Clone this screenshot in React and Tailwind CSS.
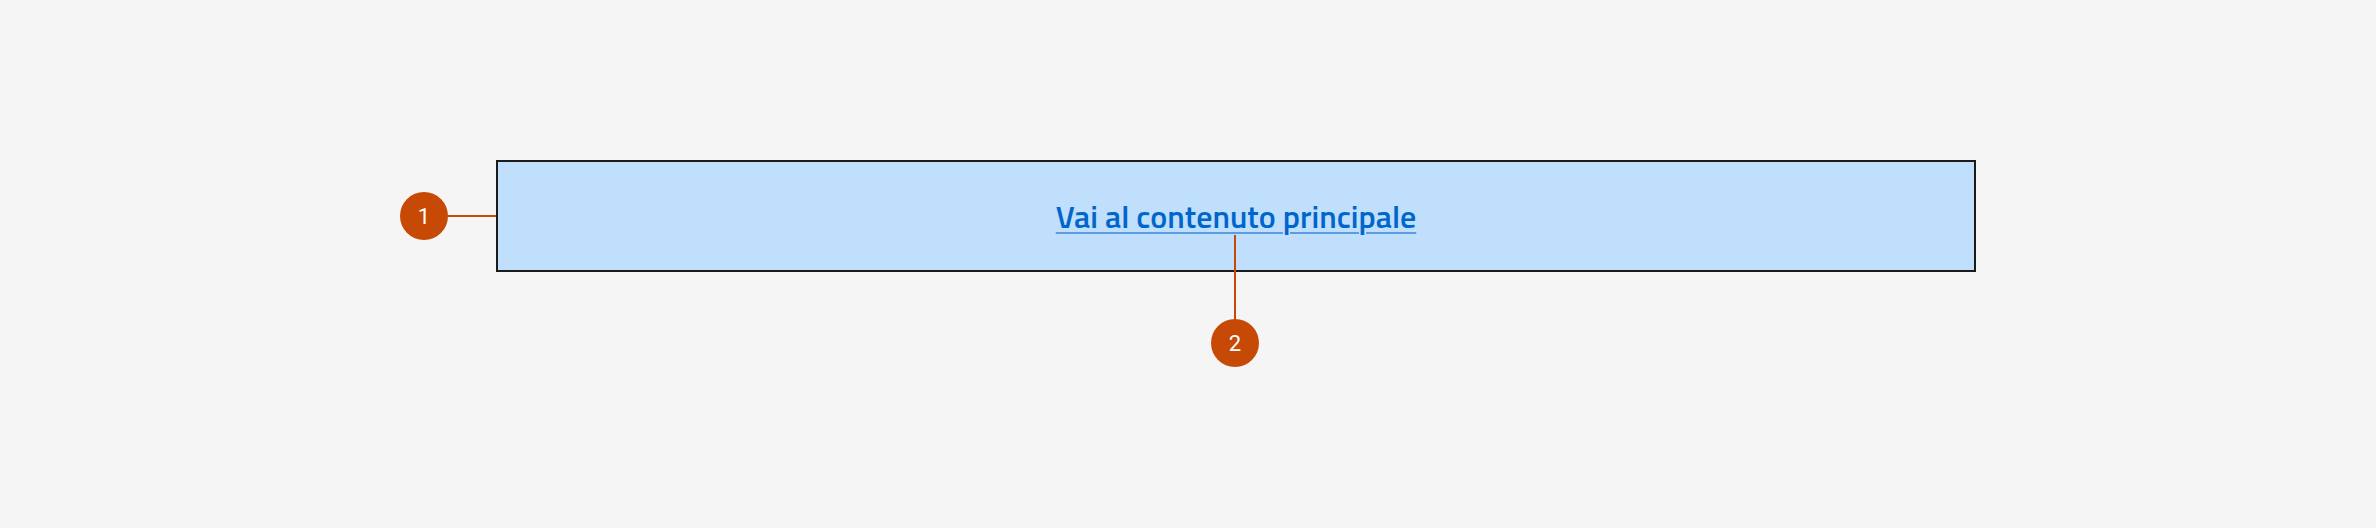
export default function App() {
  return (
    <div className="w-[2376px] h-[528px] overflow-hidden bg-[#f5f5f5] pl-[496px] pt-[160px]">
      <div className="relative w-[1480px] h-[112px] bg-[#bfdffd] border-2 border-[#1b1b1b] flex items-center justify-center">
        <a
          href="#main"
          className="text-[#0066cc] text-[32px] font-semibold leading-none underline decoration-[#5a9de3] decoration-2 underline-offset-[4px] -mt-[1px]"
          style={{ fontFamily: '"Titillium Web", "Roboto", "Liberation Sans", sans-serif' }}
        >
          Vai al contenuto principale
        </a>
        <div className="absolute left-[-98px] top-[30px] w-[48px] h-[48px] rounded-full bg-[#c64a05] flex items-center justify-center text-white text-[22px] font-normal" style={{ fontFamily: 'Roboto, sans-serif' }}>1</div>
        <div className="absolute left-[-50px] top-[53px] w-[48px] h-[2px] bg-[#c64a05]"></div>
        <div className="absolute left-[736px] top-[73px] w-[2px] h-[86px] bg-[#c64a05]"></div>
        <div className="absolute left-[713px] top-[157px] w-[48px] h-[48px] rounded-full bg-[#c64a05] flex items-center justify-center text-white text-[22px] font-normal" style={{ fontFamily: 'Roboto, sans-serif' }}>2</div>
      </div>
    </div>
  );
}
